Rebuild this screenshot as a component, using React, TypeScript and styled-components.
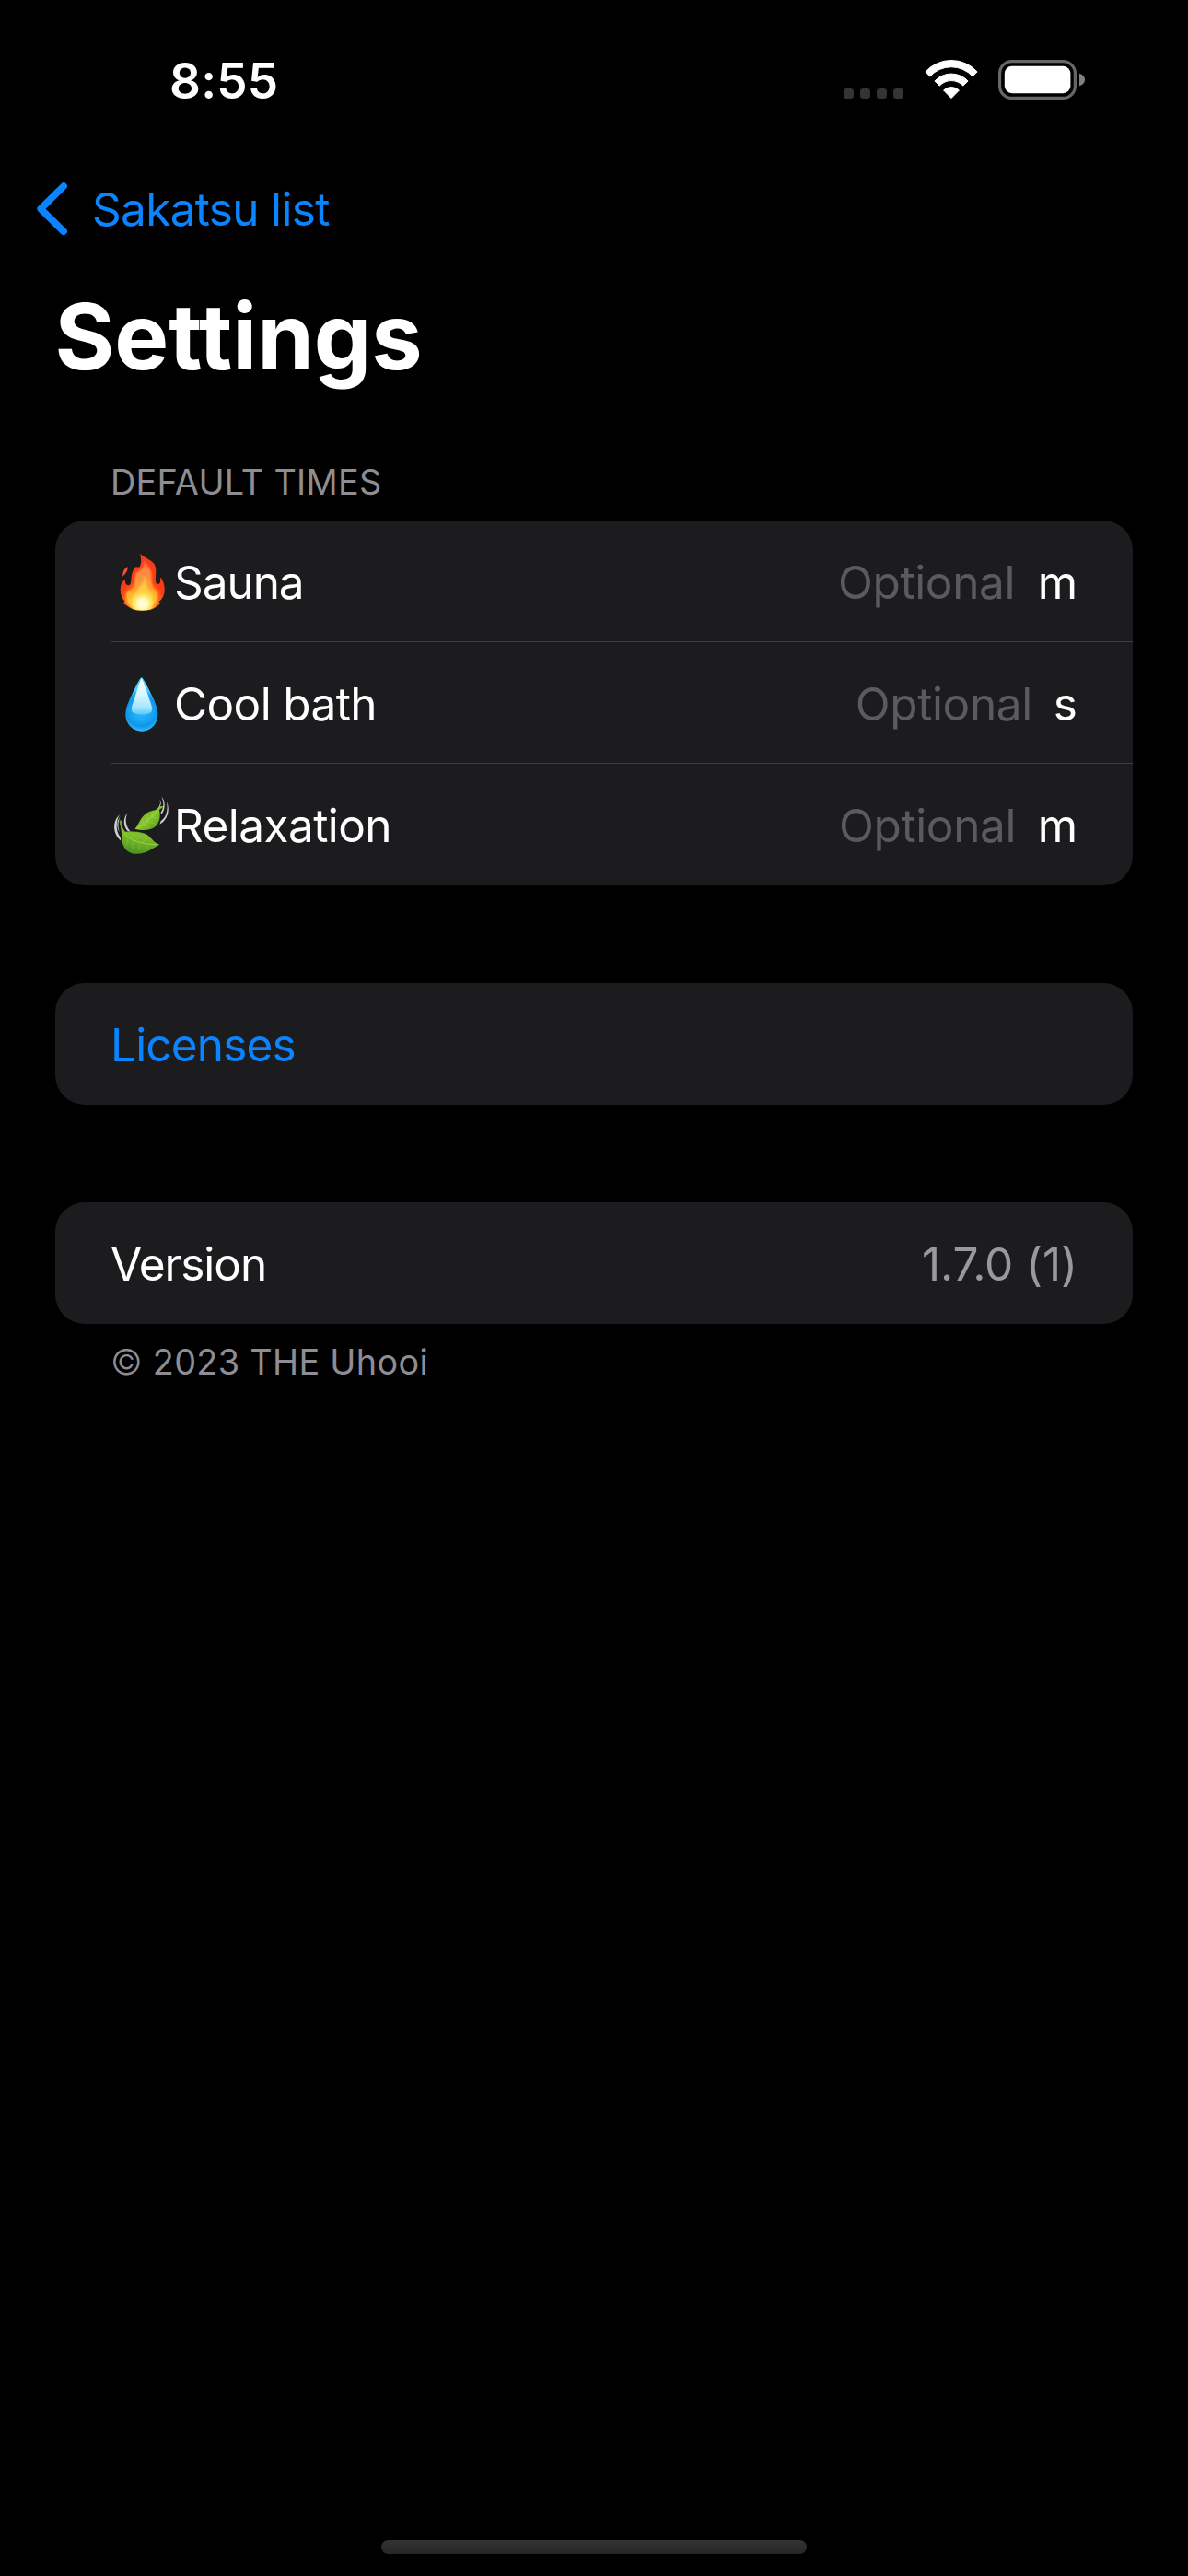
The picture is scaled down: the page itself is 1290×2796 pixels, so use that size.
import React from 'react';
import styled, { createGlobalStyle } from 'styled-components';

const color = {
  background: '#000000',
  card: '#1c1c1e',
  separator: '#3d3d41',
  label: '#ffffff',
  value: '#98989f',
  caption: '#8d8d93',
  placeholder: '#5a5a5f',
  tint: '#0a84ff',
};

const GlobalStyle = createGlobalStyle`
  *, *::before, *::after { box-sizing: border-box; }
  body {
    margin: 0;
    background: ${color.background};
    font-family: Inter, "Liberation Sans", sans-serif;
    font-weight: 400;
    color: ${color.label};
  }
  svg { display: block; flex: none; }
`;

const Screen = styled.div`
  display: flex;
  flex-direction: column;
  width: 1290px;
  height: 2796px;
  overflow: hidden;
  background: ${color.background};
`;

const StatusBar = styled.header`
  display: flex;
  align-items: flex-start;
  justify-content: space-between;
  height: 161px;
  padding: 0 111px 0 184px;
`;

const Clock = styled.time`
  margin-top: 56px;
  font-size: 53px;
  line-height: 64px;
  font-weight: 600;
  letter-spacing: 0.2px;
`;

const StatusIcons = styled.div`
  display: flex;
  align-items: flex-start;
  padding-top: 65px;
`;

const SignalDots = styled.div`
  display: flex;
  gap: 7px;
  margin: 31px 22.5px 0 0;
`;

const SignalDot = styled.span`
  width: 11px;
  height: 11px;
  border-radius: 3.5px;
  background: #343434;
`;

const BatterySlot = styled.div`
  margin-left: 22.5px;
`;

const NavBar = styled.nav`
  display: flex;
  align-items: center;
  height: 132px;
  padding-left: 36px;
`;

const BackButton = styled.a`
  display: flex;
  align-items: center;
  gap: 22px;
  color: ${color.tint};
  font-size: 49.5px;
  line-height: 60px;
  letter-spacing: -0.68px;
  text-decoration: none;
`;

const Title = styled.h1`
  margin: 0;
  padding-left: 59.5px;
  font-size: 99px;
  line-height: 144px;
  font-weight: 700;
`;

const Form = styled.main`
  display: flex;
  flex-direction: column;
  gap: 106px;
  flex: 1;
  padding: 62px 60px 0;
`;

const Section = styled.section`
  display: flex;
  flex-direction: column;
`;

const Caption = styled.p<{ $position: 'header' | 'footer' }>`
  margin: ${({ $position }) => ($position === 'header' ? '0 0 18px' : '17px 0 0')};
  padding-left: 60px;
  color: ${color.caption};
  font-size: 37.8px;
  line-height: 48px;
  letter-spacing: ${({ $position }) => ($position === 'header' ? '0.29px' : '0.31px')};
`;

const CopyrightMark = styled.span`
  font-weight: 300;
`;

const Card = styled.div`
  border-radius: 32px;
  background: ${color.card};
  overflow: hidden;
`;

const Row = styled.div`
  display: flex;
  align-items: center;
  height: 132px;
  margin-left: 60px;
  padding: 2px 60px 0 0;
  font-size: 49.5px;
  line-height: 60px;

  & + & {
    box-shadow: 0 -1px 0 ${color.separator};
  }
`;

const Label = styled.span<{ $tracking: number; $tinted?: boolean }>`
  flex: 1;
  color: ${({ $tinted }) => ($tinted ? color.tint : color.label)};
  letter-spacing: ${({ $tracking }) => $tracking}px;
`;

const Placeholder = styled.span<{ $gap: number }>`
  margin-right: ${({ $gap }) => $gap}px;
  color: ${color.placeholder};
  letter-spacing: -0.36px;
`;

const Unit = styled.span``;

const Value = styled.span`
  color: ${color.value};
  letter-spacing: -0.1px;
`;

const HomeArea = styled.footer`
  display: flex;
  justify-content: center;
  height: 39px;
`;

const HomeIndicator = styled.div`
  width: 462px;
  height: 15px;
  border-radius: 7.5px;
  background: linear-gradient(#333333, #272727);
`;

const WifiIcon = () => (
  <svg width="58" height="43" viewBox="0 0 58 43" fill="#fff" stroke="#fff" strokeWidth="1" strokeLinejoin="round">
    <path d="M0.9 12.9A38 38 0 0 1 57.1 12.9L52.2 18A31.4 31.4 0 0 0 5.8 18Z" />
    <path d="M10.9 23A24.6 24.6 0 0 1 47.1 23L41.8 28.1A17.6 17.6 0 0 0 16.2 28.1Z" />
    <path d="M20.6 33A12 12 0 0 1 37.4 33L29 41.6Z" />
  </svg>
);

const BatteryIcon = () => (
  <svg width="95" height="43" viewBox="0 0 95 43">
    <rect x="1.6" y="1.6" width="81.8" height="39.8" rx="13" fill="none" stroke="#676767" strokeWidth="3.2" />
    <rect x="6.8" y="6.8" width="71.6" height="29.4" rx="8" fill="#fff" />
    <path d="M88 14.8C91.6 15.6 94 18.3 94 21.5C94 24.7 91.6 27.4 88 28.2Z" fill="#808080" />
  </svg>
);

const ChevronIcon = () => (
  <svg width="42" height="64" viewBox="36 195 42 64" fill="none" stroke="currentColor" strokeWidth="7.6" strokeLinecap="round" strokeLinejoin="round">
    <path d="M69.1 202.1L44.2 226.7L69.1 251.2" />
  </svg>
);

const FireIcon = () => (
  <svg width="70" height="70" viewBox="30 51 210 210">
    <defs>
      <radialGradient id="fireBody" gradientUnits="userSpaceOnUse" cx="133" cy="222" r="160">
        <stop offset="0" stopColor="#ffe24a" />
        <stop offset="0.2" stopColor="#ffac20" />
        <stop offset="0.33" stopColor="#ff6a18" />
        <stop offset="0.46" stopColor="#fc3c12" />
        <stop offset="1" stopColor="#f43d22" />
      </radialGradient>
      <linearGradient id="fireInner" x1="0" y1="0" x2="0" y2="1">
        <stop offset="0" stopColor="#ff7a40" />
        <stop offset="0.35" stopColor="#ff9140" />
        <stop offset="0.65" stopColor="#ffac30" />
        <stop offset="1" stopColor="#ffe040" />
      </linearGradient>
      <radialGradient id="fireCore" gradientUnits="userSpaceOnUse" cx="134" cy="226" r="42">
        <stop offset="0" stopColor="#fffff0" />
        <stop offset="0.4" stopColor="#fffcc0" stopOpacity="0.95" />
        <stop offset="1" stopColor="#ffee50" stopOpacity="0" />
      </radialGradient>
      <filter id="fireSoft"><feGaussianBlur stdDeviation="2.5" /></filter>
      <clipPath id="fireClip">
        <path d="M127 63C139 75 160 81 172 96C183 112 175 134 177 152C179 163 188 165 192 156C194 150 190 144 193 140C202 150 207 166 206 182C205 198 200 209 188 219L191 227C180 233 176 240 160 245Q133 251 106 245C93 241 84 232 69 223L77 219C66 208 61 193 62 177C63 164 68 153 78 147C76 156 79 164 88 166C98 166 96 152 98 138C100 123 105 112 112 106C116 105 121 109 125 105C131 96 130 78 127 63Z" />
      </clipPath>
    </defs>
    <path d="M86 105C74 112 69 122 70 138C77 128 86 124 86 105Z" fill="#f4502e" />
    <g clipPath="url(#fireClip)">
      <rect x="55" y="55" width="160" height="200" fill="url(#fireBody)" />
      <path d="M139 88C153 103 164 116 164 138C163 158 168 174 176 181C186 190 187 208 175 224Q158 246 133 247Q108 246 91 229C77 212 78 193 87 184C101 181 108 174 108 154C108 136 114 120 124 118C135 113 139 101 139 88Z" fill="url(#fireInner)" filter="url(#fireSoft)" />
      <path d="M140 132C149 149 143 163 152 176C160 188 173 193 168 211C163 230 150 244 134 246C115 244 102 230 99 213C97 200 112 193 120 180C130 165 139 153 140 132Z" fill="#ffe04a" opacity=".65" filter="url(#fireSoft)" />
      <ellipse cx="134" cy="224" rx="36" ry="42" fill="url(#fireCore)" />
    </g>
  </svg>
);

const DropletIcon = () => (
  <svg width="70" height="70" viewBox="30 27 210 210">
    <defs>
      <radialGradient id="dropBody" gradientUnits="userSpaceOnUse" cx="131" cy="155" r="67">
        <stop offset="0" stopColor="#2eb8fb" />
        <stop offset="0.5" stopColor="#1ba7f5" />
        <stop offset="0.75" stopColor="#0f96e8" />
        <stop offset="0.9" stopColor="#22adf6" />
        <stop offset="1" stopColor="#48ccff" />
      </radialGradient>
      <linearGradient id="dropShine" x1="0" y1="0" x2="0" y2="1">
        <stop offset="0" stopColor="#ffffff" />
        <stop offset="0.45" stopColor="#d9f6ff" />
        <stop offset="0.8" stopColor="#a6e6fe" />
        <stop offset="1" stopColor="#55c9fb" />
      </linearGradient>
      <filter id="dropSoft"><feGaussianBlur stdDeviation="2" /></filter>
    </defs>
    <path d="M131 46C137 47 152 79 167 109C177 130 184 148 184 168A52.5 53 0 0 1 79 168C79 148 86 130 96 109C111 79 125 47 131 46Z" fill="url(#dropBody)" />
    <path d="M131 49C137 57 147 88 156 115C162 133 168 147 164 156C158 170 106 170 100 156C96 147 102 133 108 115C117 88 125 57 131 49Z" fill="url(#dropShine)" filter="url(#dropSoft)" />
  </svg>
);

const LeavesIcon = () => (
  <svg width="70" height="70" viewBox="30 33 210 210">
    <defs>
      <linearGradient id="leafLarge" x1="0.6" y1="0" x2="0.4" y2="1">
        <stop offset="0" stopColor="#559a1c" />
        <stop offset="0.45" stopColor="#80c02a" />
        <stop offset="1" stopColor="#4b9220" />
      </linearGradient>
      <linearGradient id="leafSmall" x1="0" y1="0" x2="1" y2="1">
        <stop offset="0" stopColor="#4f941e" />
        <stop offset="0.5" stopColor="#88c82c" />
        <stop offset="1" stopColor="#468a18" />
      </linearGradient>
    </defs>
    <g fill="#cfcfd1">
      <path d="M60 102C48 121 45 154 62 176L64 188C36 164 36 123 60 102Z" />
      <path d="M62 109C53 127 54 146 60 160C49 146 49 123 62 109Z" />
      <path d="M85 97C76 118 79 141 95 158L87 157C70 142 71 113 85 97Z" />
      <path d="M196 44C209 56 210 84 197 100L193 97C203 82 206 64 196 44Z" />
      <path d="M213 60C225 88 216 120 190 134L194 124C212 111 218 88 213 60Z" />
      <path d="M191 54C197 63 194 75 187 84L183 84C191 74 194 65 191 54Z" />
    </g>
    <path d="M59 123C62 119 66 120 66 125C66 139 72 151 78 158C98 157 129 156 149 168C163 178 174 197 190 200C181 206 172 209 163 216C141 229 110 236 91 225C71 213 65 190 66 164C65 149 60 136 59 123Z" fill="url(#leafLarge)" />
    <path d="M75 162C92 187 133 200 184 200" fill="none" stroke="#a5d655" strokeWidth="2.5" />
    <path d="M88 177L82 202M103 186L101 215M122 193L124 219M143 198L150 214M93 180L109 164M111 188L130 171M132 194L150 181" fill="none" stroke="#a4da49" strokeWidth="2" opacity=".55" />
    <path d="M109 149C121 139 124 119 139 105C151 91 170 91 181 85C187 78 196 73 201 76C201 81 193 82 189 88C193 103 192 124 180 138C162 157 131 154 109 149Z" fill="url(#leafSmall)" />
    <path d="M115 148C141 137 161 115 184 88" fill="none" stroke="#a8da58" strokeWidth="2.5" />
    <path d="M136 134L135 116M151 123L150 103M165 109L165 96M135 137L158 143M150 126L175 132M165 111L186 115" fill="none" stroke="#b0de55" strokeWidth="2" opacity=".55" />
  </svg>
);

const defaultTimes = [
  { icon: <FireIcon />, label: 'Sauna', unit: 'm', tracking: -1.05, gap: 24.5 },
  { icon: <DropletIcon />, label: 'Cool bath', unit: 's', tracking: -0.62, gap: 23 },
  { icon: <LeavesIcon />, label: 'Relaxation', unit: 'm', tracking: -0.57, gap: 23.5 },
];

const EmojiSlot = styled.span`
  margin-right: -1px;
`;

export default function App() {
  return (
    <Screen>
      <GlobalStyle />
      <StatusBar>
        <Clock>8:55</Clock>
        <StatusIcons>
          <SignalDots>
            {[0, 1, 2, 3].map((dot) => (
              <SignalDot key={dot} />
            ))}
          </SignalDots>
          <WifiIcon />
          <BatterySlot>
            <BatteryIcon />
          </BatterySlot>
        </StatusIcons>
      </StatusBar>
      <NavBar>
        <BackButton>
          <ChevronIcon />
          Sakatsu list
        </BackButton>
      </NavBar>
      <Title>Settings</Title>
      <Form>
        <Section>
          <Caption $position="header">DEFAULT TIMES</Caption>
          <Card>
            {defaultTimes.map(({ icon, label, unit, tracking, gap }) => (
              <Row key={label}>
                <EmojiSlot>{icon}</EmojiSlot>
                <Label $tracking={tracking}>{label}</Label>
                <Placeholder $gap={gap}>Optional</Placeholder>
                <Unit>{unit}</Unit>
              </Row>
            ))}
          </Card>
        </Section>
        <Section>
          <Card>
            <Row>
              <Label $tracking={-0.82} $tinted>
                Licenses
              </Label>
            </Row>
          </Card>
        </Section>
        <Section>
          <Card>
            <Row>
              <Label $tracking={-0.98}>Version</Label>
              <Value>1.7.0 (1)</Value>
            </Row>
          </Card>
          <Caption $position="footer">
            <CopyrightMark>©</CopyrightMark> 2023 THE Uhooi
          </Caption>
        </Section>
      </Form>
      <HomeArea>
        <HomeIndicator />
      </HomeArea>
    </Screen>
  );
}
